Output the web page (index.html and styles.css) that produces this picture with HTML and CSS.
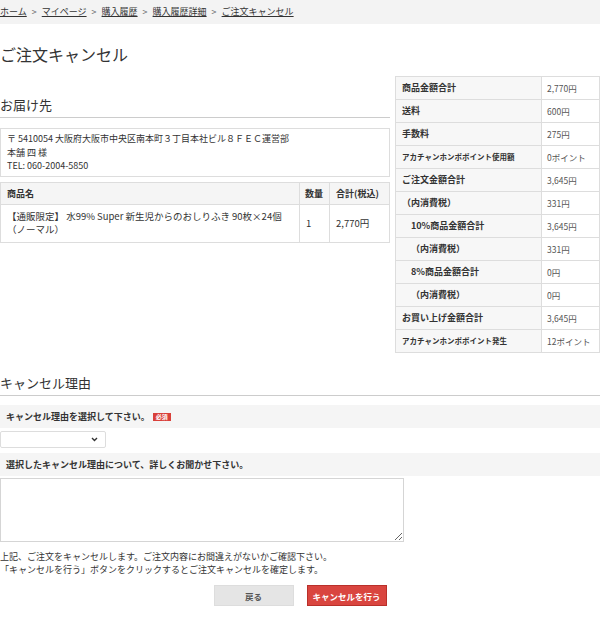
FILE: index.html
```html
<!DOCTYPE html>
<html lang="ja">
<head>
    <meta charset="UTF-8">
    <meta name="viewport" content="width=device-width, initial-scale=1.0">
    <title>ご注文キャンセル</title>
    <link rel="stylesheet" href="styles.css">
</head>
<body>
    <div class="breadcrumb">
        <a href="#">ホーム</a><span class="sep">&gt;</span><a href="#">マイページ</a><span class="sep">&gt;</span><a href="#">購入履歴</a><span class="sep">&gt;</span><a href="#">購入履歴詳細</a><span class="sep">&gt;</span><a href="#">ご注文キャンセル</a>
    </div>

    <h1 class="page-title">ご注文キャンセル</h1>

    <div class="order">
        <div class="order-left">
            <h2 class="section-title">お届け先</h2>
            <div class="address">
                〒 5410054 大阪府大阪市中央区南本町３丁目本社ビル８ＦＥＣ運営部<br>
                本舗 四 様<br>
                TEL: 060-2004-5850
            </div>
            <table class="items">
                <tr>
                    <th class="col-name">商品名</th>
                    <th class="col-qty">数量</th>
                    <th class="col-total">合計(税込)</th>
                </tr>
                <tr>
                    <td>【通販限定】 水99% Super 新生児からのおしりふき 90枚×24個<br>（ノーマル）</td>
                    <td>1</td>
                    <td>2,770円</td>
                </tr>
            </table>
        </div>

        <table class="summary">
            <tr><th>商品金額合計</th><td>2,770円</td></tr>
            <tr><th>送料</th><td>600円</td></tr>
            <tr><th>手数料</th><td>275円</td></tr>
            <tr><th class="small">アカチャンホンポポイント使用額</th><td>0ポイント</td></tr>
            <tr><th>ご注文金額合計</th><td>3,645円</td></tr>
            <tr><th>（内消費税）</th><td>331円</td></tr>
            <tr><th class="indent">10%商品金額合計</th><td>3,645円</td></tr>
            <tr><th class="indent">（内消費税）</th><td>331円</td></tr>
            <tr><th class="indent">8%商品金額合計</th><td>0円</td></tr>
            <tr><th class="indent">（内消費税）</th><td>0円</td></tr>
            <tr><th>お買い上げ金額合計</th><td>3,645円</td></tr>
            <tr><th class="small">アカチャンホンポポイント発生</th><td>12ポイント</td></tr>
        </table>
    </div>

    <h2 class="section-title cancel-title">キャンセル理由</h2>

    <div class="field-label">キャンセル理由を選択して下さい。<span class="required">必須</span></div>
    <div class="select-wrap">
        <select class="reason-select">
            <option></option>
        </select>
        <svg class="chevron" width="7" height="5" viewBox="0 0 7 5"><path d="M1 1 L3.5 3.5 L6 1" fill="none" stroke="#333" stroke-width="1.4"/></svg>
    </div>

    <div class="field-label field-label-detail">選択したキャンセル理由について、詳しくお聞かせ下さい。</div>
    <textarea class="reason-text"></textarea>

    <p class="notice">
        上記、ご注文をキャンセルします。ご注文内容にお間違えがないかご確認下さい。<br>
        「キャンセルを行う」ボタンをクリックするとご注文キャンセルを確定します。
    </p>

    <div class="buttons">
        <button class="btn btn-back">戻る</button>
        <button class="btn btn-cancel">キャンセルを行う</button>
    </div>
</body>
</html>
```

FILE: styles.css
```css
body {
    margin: 0;
    width: 600px;
    font-family: "Noto Sans CJK JP", "Noto Sans", sans-serif;
    font-size: 9px;
    color: #333;
    background: #fff;
}

.breadcrumb {
    background: #f3f3f3;
    height: 24px;
    line-height: 24px;
    font-size: 9px;
}

.breadcrumb a {
    color: #333;
    text-decoration: underline;
}

.breadcrumb .sep {
    color: #666;
    margin: 0 5px;
}

.page-title {
    font-size: 16px;
    font-weight: normal;
    line-height: 20px;
    margin: 20px 0 12px;
}

.order {
    display: flex;
    gap: 5px;
}

.order-left {
    width: 390px;
}

.section-title {
    font-size: 13px;
    font-weight: normal;
    line-height: 20px;
    margin: 19px 0 0;
    padding-bottom: 2px;
    border-bottom: 1px solid #ccc;
}

.address {
    margin-top: 10px;
    border: 1px solid #ddd;
    padding: 3px 6px;
    line-height: 13.5px;
}

.items {
    width: 100%;
    margin-top: 5px;
    border-collapse: collapse;
    table-layout: fixed;
}

.items th, .items td {
    border: 1px solid #ddd;
    padding: 0 6px;
    text-align: left;
    line-height: 13px;
    font-size: 9.5px;
}

.items th {
    background: #f5f5f5;
    height: 21px;
    font-size: 9px;
}

.items td {
    height: 37px;
}

.items .col-qty {
    width: 19px;
    padding: 0 5px;
}

.col-total {
    width: 47px;
}

.summary {
    width: 205px;
    border-collapse: collapse;
    table-layout: fixed;
    align-self: flex-start;
}

.summary th, .summary td {
    border: 1px solid #ddd;
    height: 23px;
    padding: 0 6px;
    text-align: left;
    font-size: 9px;
    line-height: 12px;
    box-sizing: border-box;
}

.summary th {
    width: 146px;
    background: #f7f7f7;
    font-weight: bold;
}

.summary td {
    color: #555;
    font-size: 8.5px;
    padding: 0 5px;
    white-space: nowrap;
}

.summary th.small {
    font-size: 7.5px;
}

.summary th.indent {
    padding-left: 15px;
}

.cancel-title {
    margin-top: 20px;
}

.field-label {
    background: #f5f5f5;
    margin-top: 9px;
    height: 23px;
    line-height: 23px;
    padding-left: 6px;
    font-size: 9px;
    font-weight: bold;
}

.field-label-detail {
    margin-top: 5px;
}

.required {
    display: inline-block;
    background: #d9403a;
    color: #fff;
    font-size: 6px;
    line-height: 8px;
    padding: 0 3px;
    margin-left: 3px;
    vertical-align: 1px;
}

.select-wrap {
    position: relative;
    width: 106px;
    margin-top: 3px;
}

.reason-select {
    display: block;
    width: 106px;
    height: 17px;
    border: 1px solid #ddd;
    border-radius: 2px;
    background: #fff;
    font-size: 9px;
    appearance: none;
    -webkit-appearance: none;
}

.chevron {
    position: absolute;
    right: 8px;
    top: 6px;
}

.reason-text {
    display: block;
    width: 404px;
    height: 64px;
    margin-top: 2px;
    border: 1px solid #d5d5d5;
    box-sizing: border-box;
    padding: 0;
}

.notice {
    margin: 8px 0 0;
    line-height: 13px;
    font-size: 9px;
}

.buttons {
    display: flex;
    justify-content: center;
    gap: 13px;
    margin-top: 9px;
}

.btn {
    width: 80px;
    height: 21px;
    padding: 0;
    font-family: inherit;
    font-size: 8.5px;
    font-weight: bold;
    cursor: pointer;
}

.btn-back {
    background: #e5e5e5;
    border: 1px solid #ddd;
    color: #555;
}

.btn-cancel {
    background: #d9453f;
    border: 1px solid #b9302a;
    color: #fff;
}
```
